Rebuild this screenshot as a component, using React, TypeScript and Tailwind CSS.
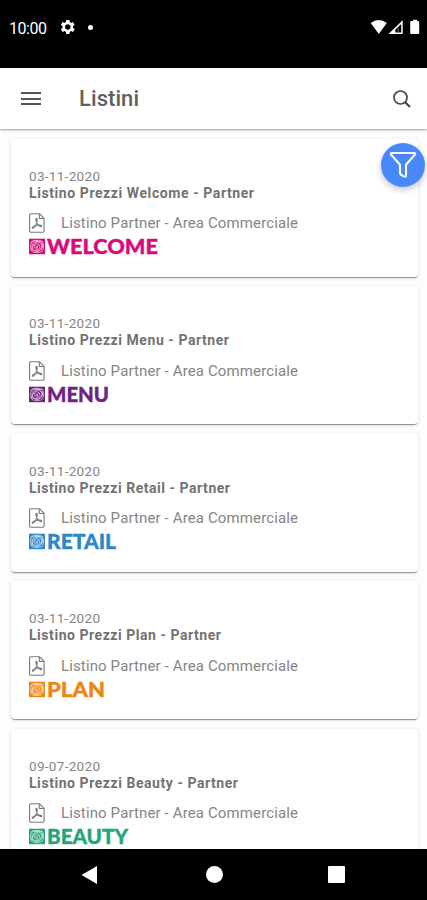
import React from "react";

type PriceList = {
  date: string;
  title: string;
  brand: string;
  color: string;
  brandWidth: number;
  titleWidth: number;
};

const lists: PriceList[] = [
  { date: "03-11-2020", title: "Listino Prezzi Welcome - Partner", brand: "WELCOME", color: "#d90b7c", brandWidth: 111, titleWidth: 225 },
  { date: "03-11-2020", title: "Listino Prezzi Menu - Partner", brand: "MENU", color: "#702283", brandWidth: 62, titleWidth: 200 },
  { date: "03-11-2020", title: "Listino Prezzi Retail - Partner", brand: "RETAIL", color: "#2f87c5", brandWidth: 69, titleWidth: 201 },
  { date: "03-11-2020", title: "Listino Prezzi Plan - Partner", brand: "PLAN", color: "#ee8512", brandWidth: 58, titleWidth: 192 },
  { date: "09-07-2020", title: "Listino Prezzi Beauty - Partner", brand: "BEAUTY", color: "#27a47c", brandWidth: 81, titleWidth: 209 },
];

function TextLine({ text, width, className }: { text: string; width: number; className: string }) {
  return (
    <svg width={width + 4} height="18" className={`block overflow-visible ${className}`}>
      <text x="0" y="14" textLength={width} fill="currentColor">{text}</text>
    </svg>
  );
}

function PdfIcon() {
  return (
    <svg width="16" height="20" viewBox="0 0 16 20" fill="none" stroke="#777" strokeWidth="1.1" strokeLinejoin="round" className="block">
      <path d="M1.7.7H10.4L15.1 5.4V18.1Q15.1 19.3 13.9 19.3H1.7Q.6 19.3.6 18.1V1.9Q.6.7 1.7.7Z" />
      <path d="M10.3.9V5.5H15" />
      <path d="M7.5 5.2C6.2 5.4 7.3 8.3 8.2 10.3C9.4 12.5 11.4 13.9 12.4 13.5C13.6 12.7 11.1 11.5 8.1 12.2C4.8 12.8 2.6 14.5 3.4 15.1C4.5 15.9 6.7 12.6 7.5 10.3C8.3 8 8.5 5.4 7.5 5.2Z" />
    </svg>
  );
}

function BrandLogo({ brand, color, width }: { brand: string; color: string; width: number }) {
  return (
    <svg width={width + 20} height="18" className="block overflow-visible font-['Lato',sans-serif] text-[21.4px] font-black">
      <rect x="0" y="1.7" width="16" height="15.5" fill={color} />
      <g fill="none" stroke="#fff" strokeWidth=".8" opacity=".75">
        <rect x="1.7" y="3.4" width="12.6" height="12" rx="4.2" />
        <circle cx="8" cy="9.4" r="5" />
        <path d="M2 5.3C7 1.8 14 5.8 14 11M14 4.8C8 3.2 2.7 7.8 3 13.4M2.2 11.8C7.5 16.5 14 12.4 13.4 6.7M5 8.8C6.2 5 11.2 7 10.8 10.2C10.1 13.3 5.2 12.8 5 8.8ZM6.4 8.6L9.3 11.4M6.7 11.2L10.2 7.3" />
      </g>
      <text x="18" y="17.1" textLength={width} lengthAdjust="spacingAndGlyphs" fill={color} stroke={color} strokeWidth=".4">{brand}</text>
    </svg>
  );
}

function Card({ item }: { item: PriceList }) {
  return (
    <article className="h-[138px] shrink-0 rounded-[4px] bg-white pt-[28.3px] pl-[18px] shadow-[0_2px_1px_-1px_rgba(0,0,0,.28),0_1px_1px_rgba(0,0,0,.16),0_1px_4px_rgba(0,0,0,.12)]">
      <TextLine text={item.date} width={71} className="text-[13.5px] text-[#858585]" />
      <div className="-mt-px">
        <TextLine text={item.title} width={item.titleWidth} className="text-[14px] font-bold text-[#727272]" />
      </div>
      <div className="mt-[11.3px] flex h-5 items-center gap-[16px]">
        <PdfIcon />
        <TextLine text="Listino Partner - Area Commerciale" width={237} className="text-[15px] text-[#858585]" />
      </div>
      <div className="mt-[4px]">
        <BrandLogo brand={item.brand} color={item.color} width={item.brandWidth} />
      </div>
    </article>
  );
}

export default function App() {
  return (
    <main className="relative flex h-[900px] w-[427px] flex-col overflow-hidden bg-[#fdfdfd] font-['Roboto',sans-serif]">
      <div className="flex h-[68px] shrink-0 items-start bg-black pt-[18px] pl-[9px] text-white">
        <TextLine text="10:00" width={38} className="mt-[1.5px] text-[16px]" />
        <svg width="16" height="16" viewBox="2 2 20 20" className="ml-[7.5px] mt-px" fill="white">
          <path d="M19.4 13a7.5 7.5 0 0 0 0-2l2.1-1.6-2-3.5-2.5 1a8 8 0 0 0-1.7-1L15 3.2h-4l-.4 2.7a8 8 0 0 0-1.7 1l-2.5-1-2 3.5L6.5 11a7.5 7.5 0 0 0 0 2l-2.1 1.6 2 3.5 2.5-1a8 8 0 0 0 1.7 1l.4 2.7h4l.4-2.7a8 8 0 0 0 1.7-1l2.5 1 2-3.5ZM13 15.4a3.4 3.4 0 1 1 0-6.8 3.4 3.4 0 0 1 0 6.8Z" />
        </svg>
        <i className="mt-[6.5px] ml-[13.5px] size-[5px] rounded-full bg-white" />
        <svg width="50" height="18" className="ml-auto mr-[7px]" fill="white">
          <path d="M.7 5.1Q8.8-1.1 16.8 5.1L8.8 15.9Z" />
          <path fillRule="evenodd" d="M18.5 15.9L32.7 2.2V15.9ZM25.3 14.4H31.2V6L25.3 11.8Z" />
          <path d="M27.6 9.5H29V14.5H27.6Z" opacity=".3" />
          <path d="M41.5 3H43V1.8H47V3H48.5Q49.2 3 49.2 3.7V15.2Q49.2 16 48.4 16H41Q40.2 16 40.2 15.2V3.7Q40.2 3 41.5 3Z" />
        </svg>
      </div>
      <header className="z-10 flex h-[61px] shrink-0 items-center bg-white shadow-[0_1px_2px_rgba(0,0,0,.38)]">
        <div className="ml-[21px] flex w-[20px] flex-col gap-[3.5px]">
          <i className="h-[2px] bg-[#555]" />
          <i className="h-[2px] bg-[#555]" />
          <i className="h-[2px] bg-[#555]" />
        </div>
        <svg width="62" height="26" className="ml-[38px] overflow-visible text-[22px] font-medium text-[#606060]">
          <text x="0" y="20" textLength="60" fill="currentColor">Listini</text>
        </svg>
        <svg width="18" height="18" className="ml-auto mr-[16px]" fill="none" stroke="#444" strokeWidth="1.7">
          <circle cx="7.5" cy="7.5" r="6.5" /><path d="M12 12L17 17" strokeWidth="2.1" />
        </svg>
      </header>
      <section className="flex h-[720px] shrink-0 flex-col gap-[9.5px] overflow-hidden pt-[9.6px] pr-[9px] pl-[11px]">
        {lists.map((item) => <Card key={item.brand} item={item} />)}
      </section>
      <nav className="flex h-[51px] shrink-0 items-center justify-between bg-black pr-[82px] pl-[80px]">
        <svg width="18" height="20" fill="white"><path d="M1.5 10L17 1V19Z" /></svg>
        <i className="ml-[2px] size-[17px] rounded-full bg-white" />
        <i className="size-[17px] rounded-[1px] bg-white" />
      </nav>
      <button aria-label="Filtra" className="absolute top-[143px] right-[2px] z-20 grid size-[44px] place-items-center rounded-full bg-[#4888fa] shadow-[0_3px_6px_rgba(0,0,0,.22)]">
        <svg width="28" height="28" viewBox="0 0 28 28" fill="none" stroke="white" strokeWidth="2.1" strokeLinejoin="round">
          <path d="M3 2H25Q27 2.2 25.8 3.8L17 13.8V24.2Q17 26.3 14.9 25.3L11.8 23.5Q11 23 11 22V13.8L2.2 3.8Q1 2.2 3 2Z" />
        </svg>
      </button>
    </main>
  );
}
